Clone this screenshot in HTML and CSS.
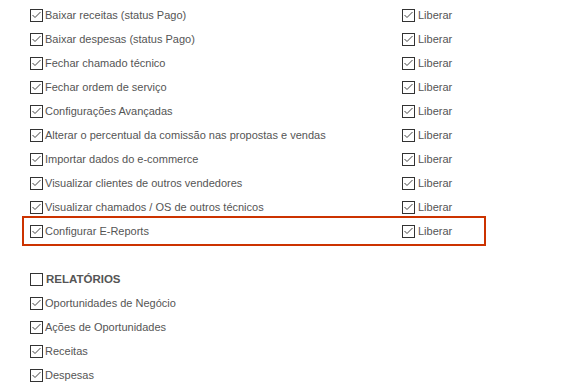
FILE: index.html
```html
<!DOCTYPE html>
<html lang="pt-BR">
<head>
  <meta charset="UTF-8">
  <title>Permissões</title>
  <link rel="stylesheet" href="styles.css">
</head>
<body>
  <div class="perms">
    <div class="row">
      <label class="item"><span class="check on"></span>Baixar receitas (status Pago)</label>
      <label class="item"><span class="check on"></span>Liberar</label>
    </div>
    <div class="row">
      <label class="item"><span class="check on"></span>Baixar despesas (status Pago)</label>
      <label class="item"><span class="check on"></span>Liberar</label>
    </div>
    <div class="row">
      <label class="item"><span class="check on"></span>Fechar chamado técnico</label>
      <label class="item"><span class="check on"></span>Liberar</label>
    </div>
    <div class="row">
      <label class="item"><span class="check on"></span>Fechar ordem de serviço</label>
      <label class="item"><span class="check on"></span>Liberar</label>
    </div>
    <div class="row">
      <label class="item"><span class="check on"></span>Configurações Avançadas</label>
      <label class="item"><span class="check on"></span>Liberar</label>
    </div>
    <div class="row">
      <label class="item"><span class="check on"></span>Alterar o percentual da comissão nas propostas e vendas</label>
      <label class="item"><span class="check on"></span>Liberar</label>
    </div>
    <div class="row">
      <label class="item"><span class="check on"></span>Importar dados do e-commerce</label>
      <label class="item"><span class="check on"></span>Liberar</label>
    </div>
    <div class="row">
      <label class="item"><span class="check on"></span>Visualizar clientes de outros vendedores</label>
      <label class="item"><span class="check on"></span>Liberar</label>
    </div>
    <div class="row">
      <label class="item"><span class="check on"></span>Visualizar chamados / OS de outros técnicos</label>
      <label class="item"><span class="check on"></span>Liberar</label>
    </div>
    <div class="row highlight">
      <label class="item"><span class="check on"></span>Configurar E-Reports</label>
      <label class="item"><span class="check on"></span>Liberar</label>
    </div>

    <div class="row section">
      <label class="item"><span class="check"></span>RELATÓRIOS</label>
    </div>
    <div class="row">
      <label class="item"><span class="check on"></span>Oportunidades de Negócio</label>
    </div>
    <div class="row">
      <label class="item"><span class="check on"></span>Ações de Oportunidades</label>
    </div>
    <div class="row">
      <label class="item"><span class="check on"></span>Receitas</label>
    </div>
    <div class="row">
      <label class="item"><span class="check on"></span>Despesas</label>
    </div>
  </div>
</body>
</html>
```

FILE: styles.css
```css
body {
  margin: 0;
  background: #fff;
  font-family: "Liberation Sans", Arial, sans-serif;
  font-size: 11px;
  color: #555;
}

.perms {
  width: 456px;
  padding: 3px 0 0 30px;
}

.row {
  display: flex;
  height: 24px;
  align-items: center;
}

.row .item:first-child {
  width: 372px;
}

.item {
  display: flex;
  align-items: center;
  gap: 2px;
}

.check {
  width: 11px;
  height: 11px;
  border: 1px solid #333;
  background: #fff;
}

.check.on {
  background: #fff url("data:image/svg+xml;utf8,<svg xmlns='http://www.w3.org/2000/svg' width='11' height='11'><path d='M1.5 5 L4 7.5 L9.5 2' fill='none' stroke='%23444' stroke-width='1'/></svg>") no-repeat;
}

.row .item + .item {
  gap: 3px;
}

.highlight {
  position: relative;
}

.highlight::after {
  content: "";
  position: absolute;
  top: -3px;
  bottom: -3px;
  left: -8px;
  right: 0;
  border: 2px solid #cc3300;
}

.section {
  margin-top: 24px;
  font-weight: bold;
  font-size: 11.5px;
}

.section .item {
  gap: 3px;
}
```
